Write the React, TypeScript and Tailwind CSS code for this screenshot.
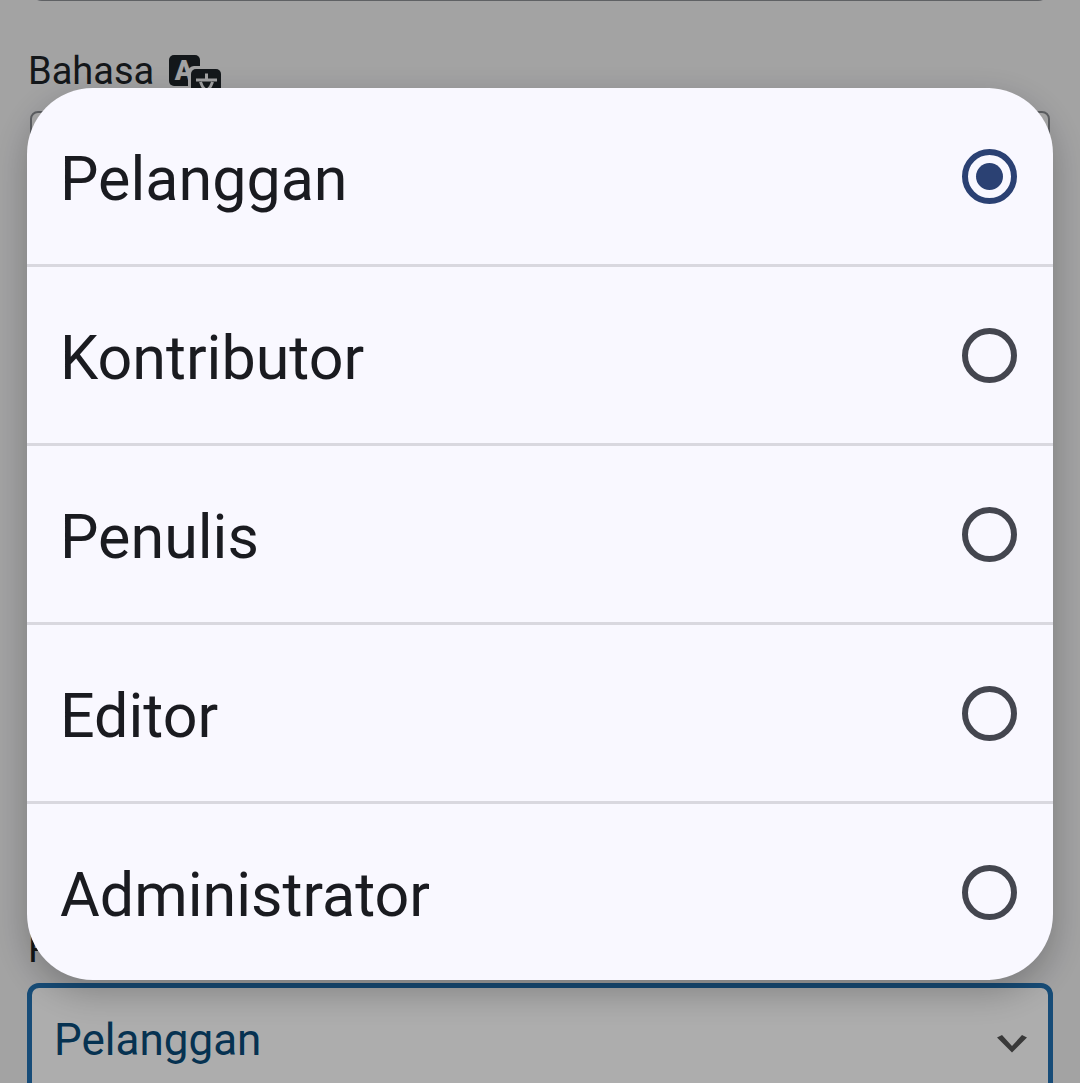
import { useState } from 'react'

const roles = ['Pelanggan', 'Kontributor', 'Penulis', 'Editor', 'Administrator']

function TranslationIcon() {
  return (
    <svg width="56" height="48" viewBox="0 0 56 48" aria-hidden="true">
      <rect x="1" y="1" width="31" height="31" rx="5" fill="#1d2327" />
      <text
        x="16"
        y="26"
        textAnchor="middle"
        fontSize="27"
        fontWeight="900"
        fontFamily="Roboto, sans-serif"
        fill="#f0f0f1"
      >
        A
      </text>
      <rect x="20" y="12" width="36" height="36" rx="6" fill="#f0f0f1" />
      <rect x="23" y="15" width="30" height="31" rx="5" fill="#1d2327" />
      <path
        d="M28 26H49M38.500 19.500V26M32.500 28C34 34 40 39 46 41M44.500 28C43 34 37 39 31 41"
        fill="none"
        stroke="#f0f0f1"
        strokeWidth="3"
      />
    </svg>
  )
}

function UserForm({ role, onRoleChange }: { role: string; onRoleChange: (role: string) => void }) {
  return (
    <form className="-mt-[89px] flex flex-col px-7 text-[38px] leading-[48px] text-[#1d2327]">
      <input
        type="text"
        aria-label="Situs web"
        className="mx-0.5 h-[90px] rounded-xl border-2 border-[#8c8f94] bg-white px-6"
      />

      <label htmlFor="locale" className="mt-[46px] flex h-12 items-start gap-3.5">
        Bahasa
        <span className="pt-[7px]">
          <TranslationIcon />
        </span>
      </label>
      <select
        id="locale"
        className="mx-0.5 mt-4 h-[110px] appearance-none rounded-lg border-2 border-[#8c8f94] bg-white px-6"
      />

      <label htmlFor="role" className="mt-[704px]">
        Peran
      </label>
      <div className="relative -mx-px mt-[10px]">
        <select
          id="role"
          value={role}
          onChange={(e) => onRoleChange(e.target.value)}
          className="h-[114px] w-full appearance-none rounded-xl border-5 border-[#2271b1] bg-white px-[22px] text-[44px] text-[#0a4b78] outline-none"
        >
          {roles.map((r) => (
            <option key={r}>{r}</option>
          ))}
        </select>
        <svg
          className="pointer-events-none absolute top-[52px] right-[26px]"
          width="30"
          height="18"
          viewBox="0 0 30 18"
          aria-hidden="true"
        >
          <path d="M0 2.500L5 0L15 11L25 0L30 2.500L15 17.500Z" fill="#555" />
        </svg>
      </div>
    </form>
  )
}

export default function App() {
  const [role, setRole] = useState('Pelanggan')

  return (
    <div className="h-screen overflow-hidden bg-[#f0f0f1] font-[Roboto,sans-serif]">
      <UserForm role={role} onRoleChange={setRole} />

      {/* Role picker */}
      <div className="fixed inset-0 flex items-start bg-black/32 px-[27px] pt-[88px]">
        <div
          role="dialog"
          aria-label="Peran"
          className="w-full divide-y-3 divide-[#d9d8df] overflow-hidden rounded-[66px] bg-[#f9f8ff] shadow-[0_12px_36px_rgba(0,0,0,0.26)]"
        >
          {roles.map((r) => (
            <label
              key={r}
              className="box-content flex h-[176px] items-center justify-between pr-9 pl-[33px] text-[61px] leading-[72px] text-[#1a1b20]"
            >
              <span className="pt-1.5">{r}</span>
              <input
                type="radio"
                name="role"
                checked={role === r}
                onChange={() => setRole(r)}
                className="grid size-[55px] appearance-none place-content-center rounded-full border-6 border-[#44464f] before:size-[27px] before:rounded-full checked:border-[#2b4173] checked:before:bg-[#2b4173]"
              />
            </label>
          ))}
        </div>
      </div>
    </div>
  )
}
